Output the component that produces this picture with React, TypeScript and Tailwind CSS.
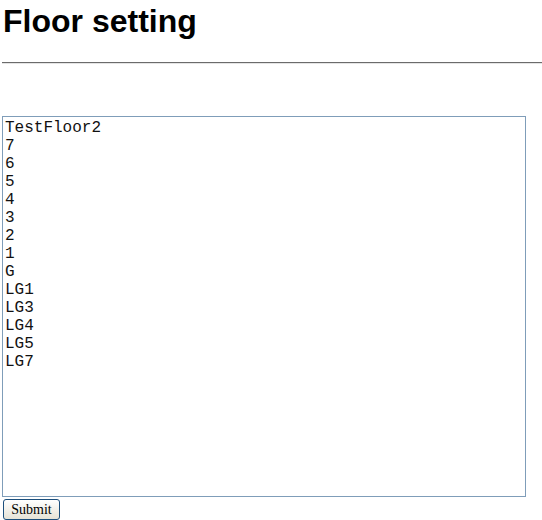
import React, { useState } from 'react';

const initialFloors = [
  'TestFloor2',
  '7',
  '6',
  '5',
  '4',
  '3',
  '2',
  '1',
  'G',
  'LG1',
  'LG3',
  'LG4',
  'LG5',
  'LG7',
].join('\n');

const App = () => {
  const [floors, setFloors] = useState(initialFloors);

  return (
    <div className="min-h-screen bg-white pl-[2px] pt-[3px]">
      <h1 className="text-[32px] leading-[37px] font-bold text-black pl-[1px] font-['Liberation_Sans',Arial,sans-serif]">
        Floor setting
      </h1>

      <hr className="mt-[22px] border-0 border-t border-t-[#6b6b6b] border-b border-b-[#e4e4e4]" />

      <form className="mt-[52px] flex flex-col items-start" onSubmit={(e) => e.preventDefault()}>
        <textarea
          value={floors}
          onChange={(e) => setFloors(e.target.value)}
          spellCheck={false}
          className="block w-[524px] h-[381px] resize-none border border-[#7f9db9] bg-white p-[2px] text-[16px] leading-[18px] text-[#111] outline-none font-['Liberation_Mono','Courier_New',monospace]"
        />
        <button
          type="submit"
          className="mt-[2px] ml-[1px] w-[57px] h-[21px] rounded-[3px] border border-[#1c4f7c] bg-gradient-to-b from-white to-[#e6e3d6] text-[14px] leading-none text-black font-['Liberation_Serif','Times_New_Roman',serif]"
        >
          Submit
        </button>
      </form>
    </div>
  );
};

export default App;
